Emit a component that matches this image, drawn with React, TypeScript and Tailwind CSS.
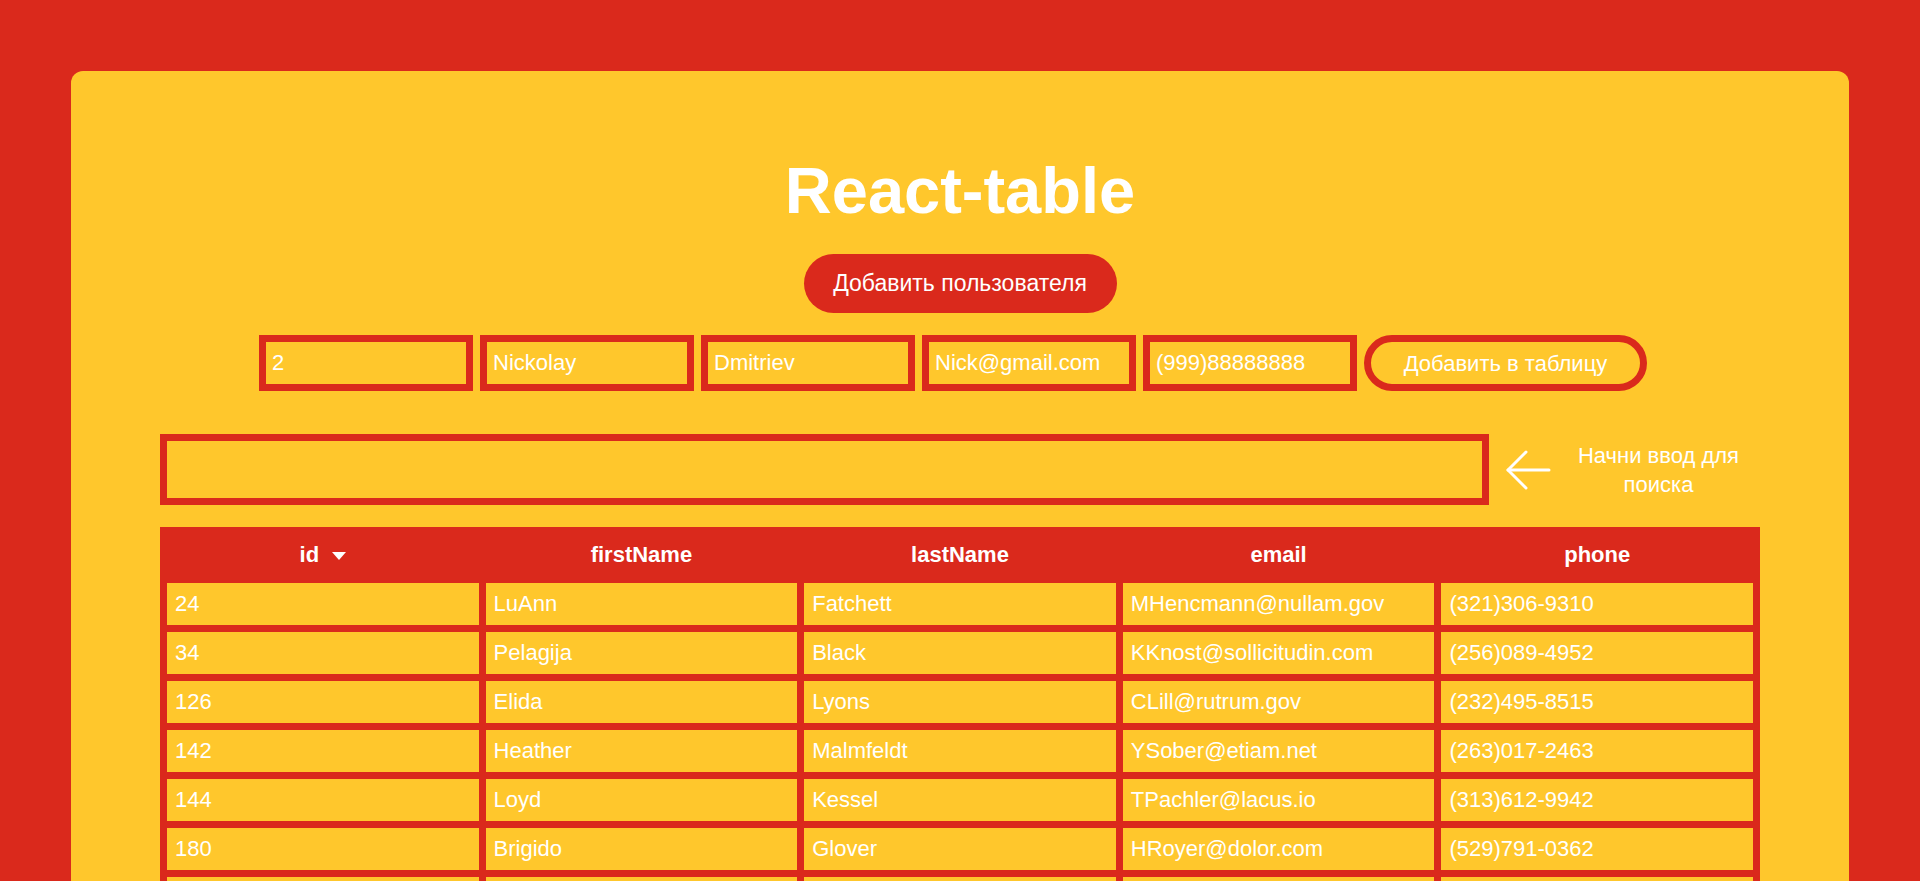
import { useState } from "react";

type Person = {
  id: number;
  firstName: string;
  lastName: string;
  email: string;
  phone: string;
};

const people: Person[] = [
  { id: 24, firstName: "LuAnn", lastName: "Fatchett", email: "MHencmann@nullam.gov", phone: "(321)306-9310" },
  { id: 34, firstName: "Pelagija", lastName: "Black", email: "KKnost@sollicitudin.com", phone: "(256)089-4952" },
  { id: 126, firstName: "Elida", lastName: "Lyons", email: "CLill@rutrum.gov", phone: "(232)495-8515" },
  { id: 142, firstName: "Heather", lastName: "Malmfeldt", email: "YSober@etiam.net", phone: "(263)017-2463" },
  { id: 144, firstName: "Loyd", lastName: "Kessel", email: "TPachler@lacus.io", phone: "(313)612-9942" },
  { id: 180, firstName: "Brigido", lastName: "Glover", email: "HRoyer@dolor.com", phone: "(529)791-0362" },
  { id: 203, firstName: "Marcelo", lastName: "Hinds", email: "AMorris@tortor.org", phone: "(904)213-5578" },
  { id: 251, firstName: "Shanita", lastName: "Coleman", email: "BLopez@amet.net", phone: "(618)457-0031" },
];

const columns: { key: keyof Person; label: string }[] = [
  { key: "id", label: "id" },
  { key: "firstName", label: "firstName" },
  { key: "lastName", label: "lastName" },
  { key: "email", label: "email" },
  { key: "phone", label: "phone" },
];

export default function App() {
  const [form, setForm] = useState({
    id: "2",
    firstName: "Nickolay",
    lastName: "Dmitriev",
    email: "Nick@gmail.com",
    phone: "(999)88888888",
  });
  const [search, setSearch] = useState("");

  const fields = ["id", "firstName", "lastName", "email", "phone"] as const;

  const rows = people.filter((p) =>
    Object.values(p).join(" ").toLowerCase().includes(search.toLowerCase())
  );

  return (
    <main className="min-h-screen bg-[#DA291C] pl-[71px] pt-[71px] pb-[71px] font-['Liberation_Sans',Arial,sans-serif] text-white">
      <div className="w-[1778px] rounded-xl bg-[#FFC72C] px-[89px] pt-[88px] pb-[60px]">
        <h1 className="text-center text-[65px] font-bold leading-[64px]">React-table</h1>

        <div className="mt-[31px] flex justify-center">
          <button className="h-[59px] w-[313px] rounded-full bg-[#DA291C] text-[23px] text-white">
            Добавить пользователя
          </button>
        </div>

        <div className="mt-[22px] flex justify-center gap-[7px] pr-[14px]">
          {fields.map((f) => (
            <input
              key={f}
              value={form[f]}
              onChange={(e) => setForm({ ...form, [f]: e.target.value })}
              className="h-[56px] w-[214px] border-[7px] border-[#DA291C] bg-transparent px-[6px] text-[22px] text-white outline-none"
            />
          ))}
          <button className="h-[56px] w-[283px] rounded-full border-[7px] border-[#DA291C] text-[22px] text-white">
            Добавить в таблицу
          </button>
        </div>

        <div className="mt-[43px] flex items-center">
          <input
            value={search}
            onChange={(e) => setSearch(e.target.value)}
            className="h-[71px] flex-1 border-[7px] border-[#DA291C] bg-transparent px-2 text-[22px] text-white outline-none"
          />
          <svg width="45" height="40" viewBox="0 0 45 40" className="ml-[17px] shrink-0" fill="none" stroke="white" strokeWidth="3" strokeLinecap="round" strokeLinejoin="round">
            <path d="M2 20 H43" />
            <path d="M20 2 L2 20 L20 38" />
          </svg>
          <p className="ml-[6px] w-[203px] shrink-0 text-center text-[22px] leading-[29px]">
            Начни ввод для поиска
          </p>
        </div>

        <table className="mt-[22px] w-full table-fixed border-separate border-spacing-[7px] bg-[#DA291C] text-[22px]">
          <thead>
            <tr>
              {columns.map((c) => (
                <th key={c.key} className="h-[42px] p-0 text-center font-bold leading-[26px]">
                  {c.label}
                  {c.key === "id" && (
                    <svg width="14" height="8" viewBox="0 0 14 8" className="ml-[13px] inline-block align-middle">
                      <path d="M0 0 H14 L7 8 Z" fill="white" />
                    </svg>
                  )}
                </th>
              ))}
            </tr>
          </thead>
          <tbody>
            {rows.map((p) => (
              <tr key={p.id}>
                {columns.map((c) => (
                  <td key={c.key} className="h-[42px] bg-[#FFC72C] px-2 py-0 leading-[26px]">
                    {p[c.key]}
                  </td>
                ))}
              </tr>
            ))}
          </tbody>
        </table>
      </div>
    </main>
  );
}
